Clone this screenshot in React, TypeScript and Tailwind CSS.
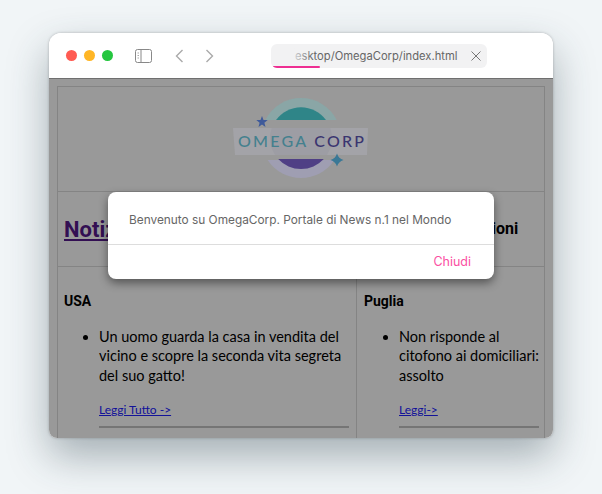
import { ReactNode } from "react"

const News = ({
  region,
  text,
  link,
}: {
  region: string
  text: ReactNode
  link: string
}) => (
  <div className="h-[172px] overflow-hidden pt-[25px] pr-[7px] pl-[6px]">
    <h3 className="font-['Roboto',sans-serif] text-sm leading-[18px] font-bold text-black">
      {region}
    </h3>
    <ul className="mt-[17px] list-disc pl-[35px] font-['Lato',sans-serif] text-[14.5px] leading-[19.3px] whitespace-nowrap text-black">
      <li>{text}</li>
    </ul>
    <a
      href="#"
      className="mt-[17px] ml-[35px] block w-fit font-['Lato',sans-serif] text-xs leading-4 text-[#2020ff] underline"
    >
      {link}
    </a>
    <hr className="mt-[8px] ml-[35px] border-t-2 border-[#c4c4c4]" />
  </div>
)

const Logo = () => (
  <svg width="142" height="88" viewBox="0 0 142 88" className="relative z-10 block">
    <path d="M35.3 25A40 40 0 0 1 106.7 25Z" fill="#8aa6a6" />
    <path d="M46 25A31 31 0 0 1 96 25Z" fill="#2f8588" />
    <path d="M37.6 65A40 40 0 0 0 104.4 65Z" fill="#9f9eb2" />
    <path d="M48.2 64A31 31 0 0 0 93.8 64Z" fill="#4f3f85" />
    <path d="M3 33H138L137 60H5Z" fill="#a3a3a8" />
    <path d="M41.7 33H100.3A31 31 0 0 1 96.9 60H45.1A31 31 0 0 1 41.7 33Z" fill="#9d9da4" />
    <path
      d="M32 21 33.5 25 37.7 25.1 34.4 27.8 35.5 31.9 32 29.6 28.5 31.9 29.6 27.8 26.3 25.1 30.5 25Z"
      fill="#3f5a9a"
    />
    <path
      d="M107 58.5Q108.5 63.5 113.5 65 108.5 66.5 107 71.5 105.5 66.5 100.5 65 105.5 63.5 107 58.5Z"
      fill="#3a7896"
    />
    <text
      x="8"
      y="52"
      textLength="126"
      fontFamily="Lato, sans-serif"
      fontSize="16"
      fontWeight="500"
    >
      <tspan fill="#44808e">OMEGA </tspan>
      <tspan fill="#3a3570">CORP</tspan>
    </text>
  </svg>
)

const App = () => (
  <div className="h-[494px] w-[602px] overflow-hidden bg-[#f1f5f7] pt-[33px] pl-[49px]">
    <div className="relative h-[405px] w-[504px] overflow-hidden rounded-t-[12px] rounded-b-[8px] bg-white shadow-[0_18px_40px_rgba(40,60,70,0.38),0_0_3px_rgba(0,0,0,0.25)]">
      <header className="flex h-[46px] items-center border-b border-[#6f6f6f] bg-white pl-[17px]">
        <div className="flex gap-[7px]">
          <span className="size-[11px] rounded-full bg-[#ff5b52]" />
          <span className="size-[11px] rounded-full bg-[#ffb625]" />
          <span className="size-[11px] rounded-full bg-[#25c63f]" />
        </div>
        <svg width="18" height="14" viewBox="0 0 18 14" fill="none" className="ml-[22px]">
          <rect x="0.5" y="0.5" width="16" height="13" rx="2" stroke="#888" />
          <path d="M6 1v12" stroke="#888" />
          <path d="M2.5 4h1.5M2.5 6.5h1.5M2.5 9h1.5" stroke="#aaa" />
        </svg>
        <svg width="9" height="14" viewBox="0 0 9 14" fill="none" className="ml-[22px]">
          <path d="M7.5 1 1.5 7l6 6" stroke="#aaa" strokeWidth="1.4" />
        </svg>
        <svg width="9" height="14" viewBox="0 0 9 14" fill="none" className="ml-[21px]">
          <path d="M1.5 1l6 6-6 6" stroke="#aaa" strokeWidth="1.4" />
        </svg>
        <div className="relative mt-[1px] ml-[57px] flex h-[24px] w-[216px] items-center overflow-hidden rounded-[6px] bg-[#f2f2f3]">
          <span className="ml-[24px] font-['Inter',sans-serif] text-[11.2px] whitespace-nowrap text-[#666]">
            esktop/OmegaCorp/index.html
          </span>
          <svg width="10" height="10" viewBox="0 0 10 10" fill="none" className="ml-[14px] shrink-0">
            <path d="M.5.5l9 9M9.5.5l-9 9" stroke="#777" />
          </svg>
          <span className="absolute top-0 left-[18px] h-full w-[24px] bg-gradient-to-r from-[#f2f2f3] to-transparent" />
          <span className="absolute bottom-0 left-[2px] h-[2px] w-[47px] rounded-full bg-[#ee2f92]" />
        </div>
      </header>

      <main className="bg-white px-[8px] pt-[7px]">
        <div className="border border-b-0 border-[#dcdcdc]">
          <div className="flex h-[105px] items-center justify-center border-b border-[#dcdcdc]">
            <Logo />
          </div>
          <div className="grid h-[75px] grid-cols-[298px_1fr] items-center border-b border-[#dcdcdc]">
            <a
              href="#"
              className="pl-[6px] font-['Roboto',sans-serif] text-[22px] font-bold text-[#551a8b] underline"
            >
              Notizie
            </a>
            <h2 className="h-full border-l border-[#dcdcdc] pt-[27px] pl-[13px] font-['Roboto',sans-serif] text-base leading-5 font-bold whitespace-nowrap text-black">
              Notizie dalle Regioni
            </h2>
          </div>
          <div className="grid grid-cols-[298px_1fr]">
            <News
              region="USA"
              text={
                <>
                  Un uomo guarda la casa in vendita del
                  <br />
                  vicino e scopre la seconda vita segreta
                  <br />
                  del suo gatto!
                </>
              }
              link="Leggi Tutto ->"
            />
            <div className="border-l border-[#dcdcdc] pl-[1px]">
              <News
                region="Puglia"
                text={
                  <>
                    Non risponde al
                    <br />
                    citofono ai domiciliari:
                    <br />
                    assolto
                  </>
                }
                link="Leggi->"
              />
            </div>
          </div>
        </div>
      </main>

      <div className="absolute inset-x-0 top-[46px] bottom-0 bg-black/40" />

      <div className="absolute top-[159px] left-[59px] z-20 w-[386px] rounded-lg bg-white font-['Inter',sans-serif] shadow-[0_4px_10px_rgba(0,0,0,0.45)]">
        <p className="h-[53px] border-b border-[#ddd] pt-[19px] pl-[21px] text-[11.85px] leading-[18px] text-[#666]">
          Benvenuto su OmegaCorp. Portale di News n.1 nel Mondo
        </p>
        <div className="flex h-[34px] items-center justify-end pr-[23px] text-[12.5px] text-[#fb4fa2]">
          Chiudi
        </div>
      </div>
    </div>
  </div>
)

export default App
